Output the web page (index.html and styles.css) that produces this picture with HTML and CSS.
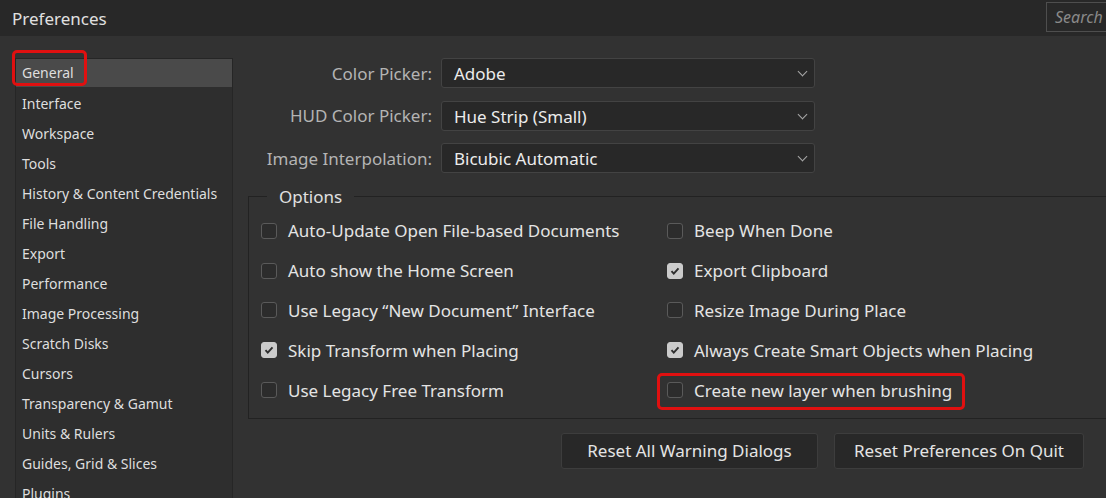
FILE: index.html
```html
<!DOCTYPE html>
<html lang="en">
<head>
    <meta charset="UTF-8">
    <title>Preferences</title>
    <link rel="stylesheet" href="styles.css">
</head>
<body>
    <div class="titlebar">
        <div class="title">Preferences</div>
        <div class="search">Search</div>
    </div>

    <div class="main">
        <div class="sidebar">
            <div class="nav-item selected"><span class="mark">General</span></div>
            <div class="nav-item">Interface</div>
            <div class="nav-item">Workspace</div>
            <div class="nav-item">Tools</div>
            <div class="nav-item">History &amp; Content Credentials</div>
            <div class="nav-item">File Handling</div>
            <div class="nav-item">Export</div>
            <div class="nav-item">Performance</div>
            <div class="nav-item">Image Processing</div>
            <div class="nav-item">Scratch Disks</div>
            <div class="nav-item">Cursors</div>
            <div class="nav-item">Transparency &amp; Gamut</div>
            <div class="nav-item">Units &amp; Rulers</div>
            <div class="nav-item">Guides, Grid &amp; Slices</div>
            <div class="nav-item">Plugins</div>
        </div>

        <div class="content">
            <div class="pickers">
                <label>Color Picker:</label>
                <div class="select">Adobe<span class="caret"></span></div>
                <label>HUD Color Picker:</label>
                <div class="select">Hue Strip (Small)<span class="caret"></span></div>
                <label>Image Interpolation:</label>
                <div class="select">Bicubic Automatic<span class="caret"></span></div>
            </div>

            <fieldset class="options">
                <legend>Options</legend>
                <div class="option-grid">
                    <div class="check"><span class="box"></span>Auto-Update Open File-based Documents</div>
                    <div class="check"><span class="box"></span>Beep When Done</div>
                    <div class="check"><span class="box"></span>Auto show the Home Screen</div>
                    <div class="check"><span class="box on"><svg viewBox="0 0 16 16"><path d="M4 8.2l2.6 2.8L12 5" /></svg></span>Export Clipboard</div>
                    <div class="check"><span class="box"></span>Use Legacy “New Document” Interface</div>
                    <div class="check"><span class="box"></span>Resize Image During Place</div>
                    <div class="check"><span class="box on"><svg viewBox="0 0 16 16"><path d="M4 8.2l2.6 2.8L12 5" /></svg></span>Skip Transform when Placing</div>
                    <div class="check"><span class="box on"><svg viewBox="0 0 16 16"><path d="M4 8.2l2.6 2.8L12 5" /></svg></span>Always Create Smart Objects when Placing</div>
                    <div class="check"><span class="box"></span>Use Legacy Free Transform</div>
                    <div class="check highlight"><span class="box"></span>Create new layer when brushing</div>
                </div>
            </fieldset>

            <div class="buttons">
                <div class="btn btn-warn">Reset All Warning Dialogs</div>
                <div class="btn btn-quit">Reset Preferences On Quit</div>
            </div>
        </div>
    </div>
</body>
</html>
```

FILE: styles.css
```css
body {
    margin: 0;
    padding: 0;
    overflow: hidden;
    background-color: #323232;
    color: #e6e6e6;
    font-family: "Noto Sans", "Open Sans", sans-serif;
    height: 498px;
}

.titlebar {
    height: 36px;
    background-color: #282828;
    display: flex;
    align-items: center;
    justify-content: space-between;
}

.title {
    margin-left: 12px;
    font-size: 17px;
    color: #e0e0e0;
}

.search {
    align-self: flex-start;
    margin-top: 2px;
    width: 60px;
    height: 30px;
    border: 1px solid #4e4e4e;
    border-right: none;
    padding-left: 8px;
    box-sizing: border-box;
    font-size: 16px;
    font-style: italic;
    color: #8a8a8a;
    line-height: 28px;
    overflow: hidden;
    white-space: nowrap;
}

.main {
    display: flex;
    padding-top: 22px;
}

.sidebar {
    margin-left: 15px;
    width: 218px;
    height: 460px;
    box-sizing: border-box;
    border: 1px solid #262626;
    border-bottom: none;
    background-color: #2e2e2e;
}

.nav-item {
    height: 30px;
    line-height: 30px;
    padding-left: 6px;
    font-size: 14px;
    color: #dedede;
    white-space: nowrap;
}

.nav-item.selected {
    background-color: #4a4a4a;
    height: 28px;
    line-height: 28px;
    margin-bottom: 2px;
}

.mark {
    position: relative;
}

.mark::after { /* red annotation box */
    content: "";
    position: absolute;
    left: -10px;
    top: -13px;
    width: 69px;
    height: 30px;
    border: 3px solid #e01010;
    border-radius: 5px;
}

.content {
    margin-left: 15px;
    flex: 1;
}

.pickers {
    display: grid;
    grid-template-columns: 184px 374px;
    column-gap: 9px;
    row-gap: 12.5px;
    align-items: center;
}

.pickers label {
    text-align: right;
    font-size: 17px;
    color: #b4b4b4;
}

.select {
    position: relative;
    height: 30px;
    box-sizing: border-box;
    border: 1px solid #434343;
    border-radius: 3px;
    background-color: #282828;
    padding-left: 12px;
    line-height: 29px;
    font-size: 17px;
    color: #ececec;
}

.caret {
    position: absolute;
    right: 8px;
    top: 9px;
    width: 6px;
    height: 6px;
    border-right: 1.3px solid #a8a8a8;
    border-bottom: 1.3px solid #a8a8a8;
    transform: rotate(45deg);
}

.options {
    margin: 12px -20px 0 0;
    padding: 3px 0 8px 12px;
    border: 1px solid #222222;
    border-right: none;
    min-width: 0;
}

.options legend {
    margin-left: 6px;
    padding: 0 12px;
    font-size: 17px;
    color: #e0e0e0;
}

.option-grid {
    display: grid;
    grid-template-columns: 406px 1fr;
    grid-auto-rows: 39.8px;
}

.check {
    display: flex;
    align-items: center;
    font-size: 17px;
    color: #e4e4e4;
    white-space: nowrap;
}

.box {
    width: 16px;
    height: 16px;
    box-sizing: border-box;
    border: 1px solid #5a5a5a;
    border-radius: 3px;
    background-color: #2c2c2c;
    margin-right: 11px;
    display: flex;
}

.box.on {
    background-color: #cbcbcb;
    border-color: #cbcbcb;
}

.box svg {
    width: 14px;
    height: 14px;
    fill: none;
    stroke: #2e2e2e;
    stroke-width: 2.2;
}

.check.highlight {
    position: relative;
}

.check.highlight::after { /* red annotation box */
    content: "";
    position: absolute;
    left: -10px;
    top: 3px;
    width: 302px;
    height: 31px;
    border: 3px solid #e01010;
    border-radius: 5px;
}

.buttons {
    display: flex;
    justify-content: flex-end;
    gap: 16px;
    margin-top: 14px;
    margin-right: 22px;
}

.btn {
    height: 36px;
    box-sizing: border-box;
    border: 1px solid #3d3d3d;
    border-radius: 3px;
    background-color: #282828;
    text-align: center;
    line-height: 34px;
    font-size: 17px;
    color: #e4e4e4;
}

.btn-warn {
    width: 257px;
}

.btn-quit {
    width: 250px;
}
```
